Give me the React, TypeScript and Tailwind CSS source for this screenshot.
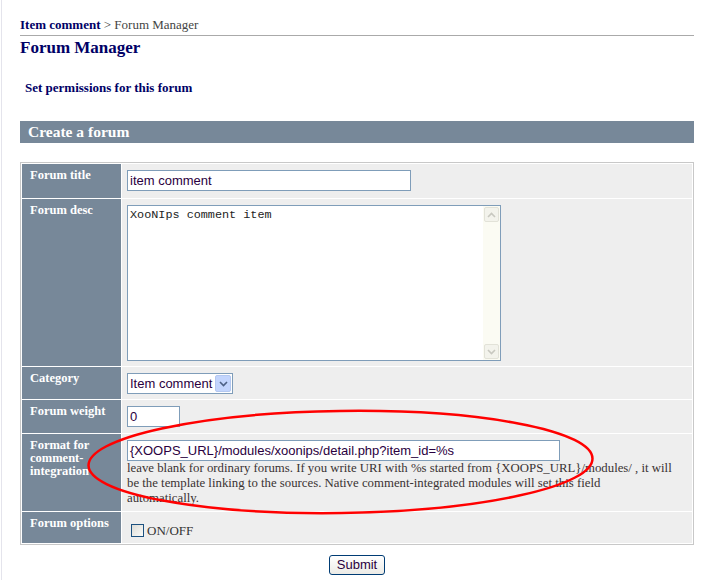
import React from "react";

const serif = { fontFamily: '"Liberation Serif", "Times New Roman", serif' };
const sans = { fontFamily: '"Liberation Sans", Arial, sans-serif' };
const mono = { fontFamily: '"Liberation Mono", "Courier New", monospace' };

const Row = ({
  label,
  height,
  children,
}: {
  label: React.ReactNode;
  height: string;
  children: React.ReactNode;
}) => (
  <div className={`flex gap-px ${height}`}>
    <div className="w-[99px] shrink-0 bg-[#778899] px-[8px] pt-[5px] text-[12.5px] leading-[13px] font-bold text-white">
      {label}
    </div>
    <div className="flex-1 bg-[#eeeeee] px-[5px] pt-[6px]">{children}</div>
  </div>
);

const Chevron = ({ up, color }: { up?: boolean; color: string }) => (
  <svg width="9" height="6" viewBox="0 0 9 6">
    <path
      d={up ? "M1 5 L4.5 1.5 L8 5" : "M1 1 L4.5 4.5 L8 1"}
      fill="none"
      stroke={color}
      strokeWidth="1.6"
    />
  </svg>
);

export default function App() {
  return (
    <div className="relative w-[706px] h-[580px] bg-white overflow-hidden" style={serif}>
      <div className="absolute left-[1px] top-0 h-full w-px bg-[#e4e4ec]" />
      <div className="pl-[20px] pr-[12px]">
        <div className="pt-[17px] pb-[3px] text-[13px] leading-[15px] border-b border-[#aaaaaa]">
          <span className="font-bold text-[#000066]">Item comment</span>
          <span className="text-[#444444]"> &gt; Forum Manager</span>
        </div>
        <div className="mt-[2px] text-[17px] leading-[20px] font-bold text-[#000066]">
          Forum Manager
        </div>
        <div className="mt-[23px] pl-[5px] text-[13px] leading-[14px] font-bold text-[#000066]">
          Set permissions for this forum
        </div>
        <div className="mt-[26px] h-[22px] bg-[#778899] pl-[8px] text-[15.5px] leading-[22px] font-bold text-white">
          Create a forum
        </div>

        <div className="mt-[19px] border border-[#c8c8c8] bg-white p-px flex flex-col gap-px">
          <Row label="Forum title" height="h-[34px]">
            <div
              className="w-[284px] h-[21px] border border-[#7f9db9] bg-white px-[2px] text-[13px] leading-[19px] text-[#2a0040]"
              style={sans}
            >
              item comment
            </div>
          </Row>
          <Row label="Forum desc" height="h-[167px]">
            <div className="flex w-[374px] h-[156px] border border-[#7f9db9] bg-white">
              <div className="flex-1 px-[2px] pt-[2px] text-[11.8px] leading-[15px] text-[#222]" style={mono}>
                XooNIps comment item
              </div>
              <div className="w-[17px] bg-[#fbfbf3] flex flex-col justify-between p-px">
                <div className="h-[15px] rounded-[2px] border border-[#e2e2d8] bg-[#f3f3ec] flex items-center justify-center">
                  <Chevron up color="#c8c8c0" />
                </div>
                <div className="h-[15px] rounded-[2px] border border-[#e2e2d8] bg-[#f3f3ec] flex items-center justify-center">
                  <Chevron color="#c8c8c0" />
                </div>
              </div>
            </div>
          </Row>
          <Row label="Category" height="h-[32px]">
            <div className="flex w-[106px] h-[21px] border border-[#7f9db9] bg-white" style={sans}>
              <div className="flex-1 pl-[2px] text-[13px] leading-[19px] text-[#2a0040]">Item comment</div>
              <div className="w-[16px] m-px rounded-[2px] bg-[#c3d5fd] border border-[#b4c8f0] flex items-center justify-center">
                <Chevron color="#4d6185" />
              </div>
            </div>
          </Row>
          <Row label="Forum weight" height="h-[33px]">
            <div
              className="w-[53px] h-[21px] border border-[#7f9db9] bg-white px-[2px] text-[13px] leading-[19px] text-[#2a0040]"
              style={sans}
            >
              0
            </div>
          </Row>
          <Row
            label={
              <>
                Format for
                <br />
                comment-
                <br />
                integration
              </>
            }
            height="h-[77px]"
          >
            <div
              className="w-[433px] h-[21px] border border-[#7f9db9] bg-white px-[2px] text-[13px] leading-[19px] text-[#2a0040]"
              style={sans}
            >
              {"{XOOPS_URL}/modules/xoonips/detail.php?item_id=%s"}
            </div>
            <div className="pr-[13px] text-[12.8px] leading-[15px] text-[#3a3333]">
              leave blank for ordinary forums. If you write URI with %s started from {"{XOOPS_URL}"}/modules/ , it will
              be the template linking to the sources. Native comment-integrated modules will set this field
              automatically.
            </div>
          </Row>
          <Row label="Forum options" height="h-[31px]">
            <div className="flex items-center pt-[3px] pl-[4px] gap-[3px] text-[13px] text-[#333333]">
              <div className="w-[13px] h-[13px] border border-[#1c5180] bg-gradient-to-br from-[#dcdcd7] to-[#fbfbf9]" />
              <span>ON/OFF</span>
            </div>
          </Row>
        </div>

        <div className="mt-[10px] flex justify-center">
          <div
            className="h-[20px] px-[7px] rounded-[3px] border border-[#003c74] bg-gradient-to-b from-[#ffffff] to-[#ecebe6] text-[13px] leading-[18px] text-[#2a0040]"
            style={sans}
          >
            Submit
          </div>
        </div>
      </div>

      <svg className="absolute inset-0 pointer-events-none" width="706" height="580">
        <ellipse cx="340.5" cy="462" rx="252" ry="51" fill="none" stroke="#ff0000" strokeWidth="2.5" transform="rotate(-0.8 340.5 462)" />
      </svg>
    </div>
  );
}
